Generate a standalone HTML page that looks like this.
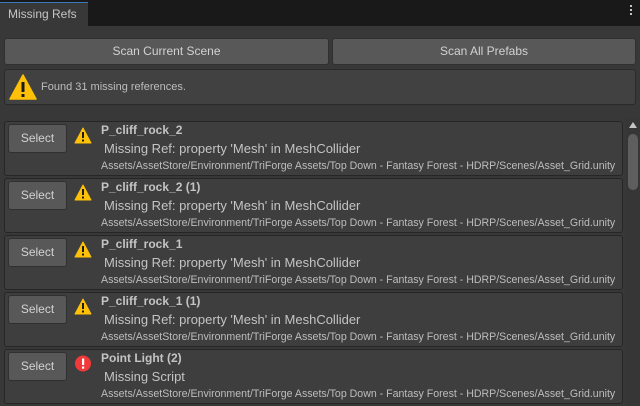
<html><head><style>
body{margin:0;width:640px;height:406px;background:#383838;font-family:"Liberation Sans",sans-serif;color:#c8c8c8;position:relative;overflow:hidden}
.tabbar{position:absolute;left:0;top:0;width:640px;height:26px;background:#191919}
.tab{position:absolute;left:0;top:2px;width:88px;height:24px;background:#383838;border-top:1px solid #3a79bb;box-sizing:border-box;font-size:12px;line-height:22px;padding-left:8px;color:#c4c4c4}
.dots{position:absolute;right:8px;top:5px;width:2px;}
.dots i{display:block;width:2px;height:2px;background:#c4c4c4;margin-bottom:2px}
.btn{position:absolute;background:#585858;border:1px solid #303030;border-radius:3px;box-sizing:border-box;text-align:center;font-size:12px;color:#d2d2d2}
.info{position:absolute;left:4px;top:69px;width:632px;height:36px;background:#414141;border:1px solid #2a2a2a;border-radius:3px;box-sizing:border-box}
.entry{position:absolute;left:4px;width:619px;height:55px;background:#3e3e3e;border:1px solid #262626;border-radius:3px;box-sizing:border-box}
.sel{left:3px;top:2px;width:59px;height:29px;line-height:27px}
.t{position:absolute;left:96px;top:1px;font-size:12px;font-weight:bold;color:#c4c4c4;white-space:nowrap}
.m{position:absolute;left:99px;top:19px;font-size:13px;color:#c4c4c4;white-space:nowrap}
.p{position:absolute;left:96px;top:38px;font-size:10.6px;color:#bdbdbd;white-space:nowrap}
.ic{position:absolute;left:69px;top:5px}
.sb{position:absolute;left:626px;top:118px;width:14px;height:288px;background:#363636}
</style></head><body>
<div class="tabbar"><div class="tab">Missing Refs</div><div class="dots"><i></i><i></i><i></i></div></div>
<div class="btn" style="left:4px;top:38px;width:325px;height:27px;line-height:25px">Scan Current Scene</div>
<div class="btn" style="left:332px;top:38px;width:304px;height:27px;line-height:25px">Scan All Prefabs</div>
<div class="info"><svg style="position:absolute;left:4px;top:4px" width="28" height="26" viewBox="0 0 28 26"><path d="M14 1 L27 25 L1 25 Z" fill="#ffc107" stroke="#ffc107" stroke-linejoin="round" stroke-width="1.5"/><rect x="12.5" y="8" width="3" height="10" fill="#1a1a1a"/><rect x="12.5" y="20" width="3" height="3" fill="#1a1a1a"/></svg><span style="position:absolute;left:36px;top:11px;font-size:11px;color:#bdbdbd">Found 31 missing references.</span></div>
<div class="entry" style="top:121px"><div class="btn sel">Select</div><svg class="ic" width="18" height="17" viewBox="0 0 18 17"><path d="M9 1 L17 16 L1 16 Z" fill="#ffc107" stroke="#ffc107" stroke-linejoin="round"/><rect x="8" y="5" width="2" height="6" fill="#1a1a1a"/><rect x="8" y="12.5" width="2" height="2" fill="#1a1a1a"/></svg><div class="t">P_cliff_rock_2</div><div class="m">Missing Ref: property 'Mesh' in MeshCollider</div><div class="p">Assets/AssetStore/Environment/TriForge Assets/Top Down - Fantasy Forest - HDRP/Scenes/Asset_Grid.unity</div></div>
<div class="entry" style="top:178px"><div class="btn sel">Select</div><svg class="ic" width="18" height="17" viewBox="0 0 18 17"><path d="M9 1 L17 16 L1 16 Z" fill="#ffc107" stroke="#ffc107" stroke-linejoin="round"/><rect x="8" y="5" width="2" height="6" fill="#1a1a1a"/><rect x="8" y="12.5" width="2" height="2" fill="#1a1a1a"/></svg><div class="t">P_cliff_rock_2 (1)</div><div class="m">Missing Ref: property 'Mesh' in MeshCollider</div><div class="p">Assets/AssetStore/Environment/TriForge Assets/Top Down - Fantasy Forest - HDRP/Scenes/Asset_Grid.unity</div></div>
<div class="entry" style="top:235px"><div class="btn sel">Select</div><svg class="ic" width="18" height="17" viewBox="0 0 18 17"><path d="M9 1 L17 16 L1 16 Z" fill="#ffc107" stroke="#ffc107" stroke-linejoin="round"/><rect x="8" y="5" width="2" height="6" fill="#1a1a1a"/><rect x="8" y="12.5" width="2" height="2" fill="#1a1a1a"/></svg><div class="t">P_cliff_rock_1</div><div class="m">Missing Ref: property 'Mesh' in MeshCollider</div><div class="p">Assets/AssetStore/Environment/TriForge Assets/Top Down - Fantasy Forest - HDRP/Scenes/Asset_Grid.unity</div></div>
<div class="entry" style="top:292px"><div class="btn sel">Select</div><svg class="ic" width="18" height="17" viewBox="0 0 18 17"><path d="M9 1 L17 16 L1 16 Z" fill="#ffc107" stroke="#ffc107" stroke-linejoin="round"/><rect x="8" y="5" width="2" height="6" fill="#1a1a1a"/><rect x="8" y="12.5" width="2" height="2" fill="#1a1a1a"/></svg><div class="t">P_cliff_rock_1 (1)</div><div class="m">Missing Ref: property 'Mesh' in MeshCollider</div><div class="p">Assets/AssetStore/Environment/TriForge Assets/Top Down - Fantasy Forest - HDRP/Scenes/Asset_Grid.unity</div></div>
<div class="entry" style="top:349px"><div class="btn sel">Select</div><svg class="ic" width="18" height="17" viewBox="0 0 18 17"><circle cx="9" cy="8.5" r="8" fill="#f03a3a"/><rect x="8" y="3.5" width="2.2" height="6.5" fill="#fff"/><rect x="8" y="11.5" width="2.2" height="2.2" fill="#fff"/></svg><div class="t">Point Light (2)</div><div class="m">Missing Script</div><div class="p">Assets/AssetStore/Environment/TriForge Assets/Top Down - Fantasy Forest - HDRP/Scenes/Asset_Grid.unity</div></div>
<div class="sb"><svg style="position:absolute;left:3px;top:4px" width="8" height="6"><path d="M4 0 L8 6 L0 6Z" fill="#c4c4c4"/></svg><div style="position:absolute;left:2px;top:16px;width:10px;height:56px;background:#5e5e5e;border-radius:5px"></div></div>
</body></html>
